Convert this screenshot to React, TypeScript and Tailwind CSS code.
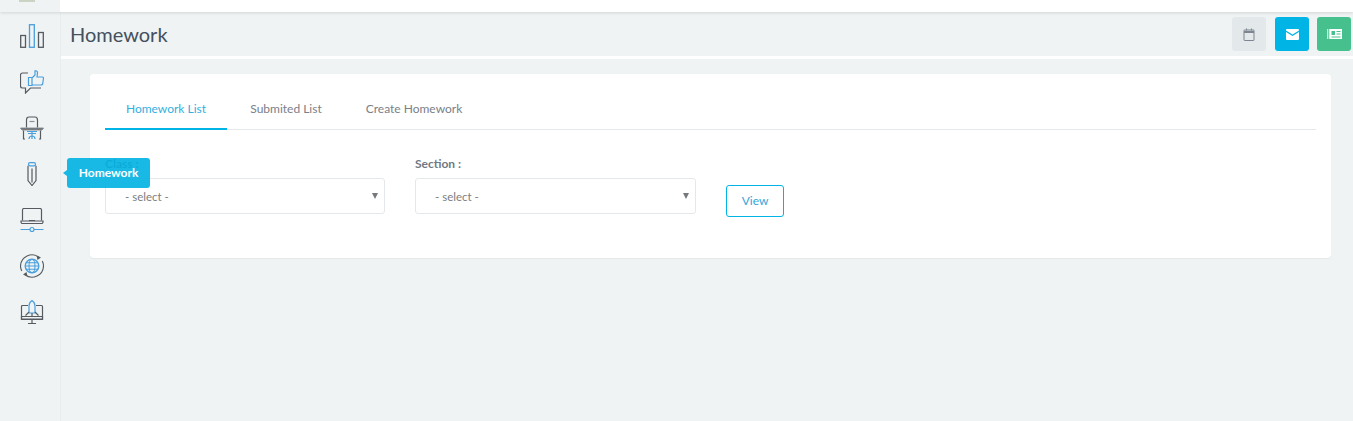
const dark = "#565b61";
const blue = "#4a9fdc";

function BarsIcon() {
  return (
    <svg width="24" height="24" viewBox="0 0 24 24" fill="none" strokeWidth="1.3">
      <rect x="0.700" y="11.500" width="4.800" height="11.800" stroke={dark} />
      <rect x="9.500" y="0.700" width="4.800" height="22.600" stroke={blue} />
      <rect x="18.500" y="8.500" width="4.800" height="14.800" stroke={dark} />
    </svg>
  );
}

function ThumbIcon() {
  return (
    <svg width="24" height="24" viewBox="0 0 24 24" fill="none" strokeWidth="1.2">
      <path d="M8 3H2.500a2 2 0 0 0-2 2v11a2 2 0 0 0 2 2h3v5l5-5h10.500" stroke={dark} />
      <path d="M8.500 7.500h3.500v8H8.500zM12 8l3-3V.800c2-.3 2.800 1 2.400 2.800L17 7h5.500a1 1 0 0 1 1 1.100L22.800 13a2 2 0 0 1-2 2H12" stroke={blue} />
    </svg>
  );
}

function DeskIcon() {
  return (
    <svg width="24" height="24" viewBox="0 0 24 24" fill="none" strokeWidth="1.2">
      <path d="M6.500 11.500V4c0-2 1-3 2.500-3h6c1.500 0 2.500 1 2.500 3v7.500" stroke={dark} />
      <path d="M9.500 5.500h5" stroke="#8a8f94" />
      <path d="M.500 12h23l-1.500 2H2z" fill="#767b80" stroke="#767b80" strokeWidth="0.800" />
      <path d="M3.500 14.500V23h1.500M20.500 14.500V23H19" stroke={dark} />
      <path d="M7 15.500h10M8 17.500h8M12 15.500V23M9 23c0-2 1-3 3-3s3 1 3 3" stroke={blue} />
    </svg>
  );
}

function PencilIcon() {
  return (
    <svg width="24" height="24" viewBox="0 0 24 24" fill="none" strokeWidth="1.2">
      <rect x="8.500" y="0.600" width="7" height="3.200" rx="1.600" stroke={blue} />
      <path d="M8 3.800V18.500l4 5 4-5V3.800M12 6.500v14" stroke={dark} />
    </svg>
  );
}

function LaptopIcon() {
  return (
    <svg width="24" height="24" viewBox="0 0 24 24" fill="none" strokeWidth="1.2">
      <path d="M2.500 12.500V2a1.500 1.500 0 0 1 1.500-1.500h16A1.500 1.500 0 0 1 21.500 2v10.500" stroke={dark} />
      <path d="M1 13h22v1a1.500 1.500 0 0 1-1.500 1.500h-19A1.500 1.500 0 0 1 1 14zM9 12.500h6" stroke={dark} />
      <path d="M.500 21.500h9.500M14 21.500h9.500" stroke={blue} />
      <circle cx="12" cy="21.500" r="2" stroke={blue} />
    </svg>
  );
}

function GlobeIcon() {
  return (
    <svg width="24" height="24" viewBox="0 0 24 24" fill="none" strokeWidth="1.1">
      <path d="M19 3.200A11.500 11.500 0 0 0 .500 12c0 2 .5 3.500 1.200 5" stroke={dark} />
      <path d="M5 20.800A11.500 11.500 0 0 0 23.500 12c0-2-.5-3.500-1.200-5" stroke={dark} />
      <path d="M16.500 1.500l4.500 2-3.500 2.500zM7.500 22.500l-4.500-2 3.500-2.500z" fill={dark} />
      <circle cx="12" cy="12" r="6.800" stroke={blue} strokeWidth="1.400" />
      <ellipse cx="12" cy="12" rx="3" ry="6.800" stroke={blue} />
      <path d="M5.200 12h13.600M6.200 8.800h11.600M6.200 15.200h11.600" stroke={blue} />
    </svg>
  );
}

function RocketIcon() {
  return (
    <svg width="24" height="24" viewBox="0 0 24 24" fill="none" strokeWidth="1.2">
      <path d="M8 5.500H2.500a1 1 0 0 0-1 1V19h21V6.500a1 1 0 0 0-1-1H16" stroke={dark} />
      <path d="M1.500 16.500h21v3h-21zM12 19.500v3.500M8 23.500h8" stroke={dark} />
      <path d="M9 13V6c0-2.500 1.500-4.500 3-5.500 1.500 1 3 3 3 5.500v7z" stroke={blue} />
      <path d="M9 12l-3.500 3.500M15 12l3.500 3.500M12 13v3" stroke={dark} />
    </svg>
  );
}

function SideIcon({ children }: { children: React.ReactNode }) {
  return <div className="flex h-[46px] items-center justify-center">{children}</div>;
}

function Field({ label, className = "" }: { label: string; className?: string }) {
  return (
    <div className={className}>
      <label className="block h-[23px] text-[12px] font-bold leading-[18px] text-[#6f7985]">{label}</label>
      <div className="relative flex h-[36px] items-center rounded-[3px] border border-[#e5e8ea] pl-[19px] pt-[1px] text-[11.5px] text-[#7d7f82]">
        - select -
        <span className="absolute right-[6px] top-[14px] h-0 w-0 border-x-[3.5px] border-t-[6px] border-x-transparent border-t-[#75797c]" />
      </div>
    </div>
  );
}

export default function App() {
  return (
    <div className="relative h-[421px] w-[1353px] overflow-hidden bg-[#eff3f4] font-['Lato','Liberation_Sans',sans-serif]">
      {/* top strip */}
      <div className="relative z-10 flex h-[12px] shadow-[0_1px_3px_rgba(0,0,0,0.12)]">
        <div className="relative w-[60px] shrink-0 bg-[#eff3f4]">
          <div className="absolute left-[19px] top-0 h-[2px] w-[16px] bg-[#c9d4c4]" />
        </div>
        <div className="flex-1 bg-white" />
      </div>

      <div className="flex h-[409px]">
        {/* sidebar */}
        <aside className="w-[61px] shrink-0 border-r border-[#e9eded] bg-[#eff3f4] pl-[3px] pt-[1px]">
          <SideIcon><BarsIcon /></SideIcon>
          <SideIcon><ThumbIcon /></SideIcon>
          <SideIcon><DeskIcon /></SideIcon>
          <SideIcon><PencilIcon /></SideIcon>
          <SideIcon><LaptopIcon /></SideIcon>
          <SideIcon><GlobeIcon /></SideIcon>
          <SideIcon><RocketIcon /></SideIcon>
        </aside>

        <div className="min-w-0 flex-1">
          {/* title bar */}
          <div className="flex h-[44px] items-center justify-between pl-[9px] pr-[2px]">
            <h1 className="text-[20px] font-normal text-[#44505d]">Homework</h1>
            <div className="flex">
              <button className="flex h-[34px] w-[34px] items-center justify-center rounded-[3px] bg-[#e3e8ea]">
                <svg width="12" height="13" viewBox="0 0 12 13" fill="none" stroke="#7d8590" strokeWidth="1">
                  <rect x="1" y="2" width="10" height="10.500" rx="0.500" />
                  <path d="M1 4h10" strokeWidth="2" />
                  <path d="M3.500 0.500v2M8.500 0.500v2" />
                </svg>
              </button>
              <button className="ml-[9px] flex h-[34px] w-[34px] items-center justify-center rounded-[3px] bg-[#00b5e6]">
                <svg width="13" height="11" viewBox="0 0 13 11" fill="#fff">
                  <path d="M0 1a1 1 0 0 1 1-1h11a1 1 0 0 1 1 1v.500L6.500 5.500 0 1.500zM0 3l6.500 4L13 3v7a1 1 0 0 1-1 1H1a1 1 0 0 1-1-1z" />
                </svg>
              </button>
              <button className="ml-[8px] flex h-[34px] w-[34px] items-center justify-center rounded-[3px] bg-[#46c08c]">
                <svg width="15" height="10" viewBox="0 0 15 10" fill="none">
                  <rect x="0" y="0" width="15" height="10" fill="#c8efdd" />
                  <path d="M1.500 0v10" stroke="#46c08c" strokeWidth="0.700" />
                  <rect x="3" y="0" width="12" height="10" fill="#fff" />
                  <rect x="4.500" y="2" width="3.500" height="4" fill="#46c08c" />
                  <path d="M9.500 2.500h4M9.500 5h4M4.500 8h9" stroke="#46c08c" />
                </svg>
              </button>
            </div>
          </div>
          <div className="h-[3px] bg-white" />

          {/* card */}
          <main className="ml-[29px] mr-[22px] mt-[15px] h-[184px] rounded-[4px] bg-white px-[15px] shadow-[0_1px_1px_rgba(0,0,0,0.05)]">
            <div className="flex h-[56px] border-b border-[#e5e8ea] text-[12px]">
              <a className="flex h-[56px] w-[122px] items-center justify-center border-b-2 border-[#00b5e6] pt-[15px] text-[#33b0e0]">Homework List</a>
              <a className="flex h-[55px] w-[118px] items-center justify-center pt-[14px] text-[#7a8089]">Submited List</a>
              <a className="flex h-[55px] w-[137px] items-center justify-center pl-[1px] pt-[14px] text-[#7a8089]">Create Homework</a>
            </div>
            <div className="mt-[25px] flex items-start">
              <Field label="Class :" className="w-[280px]" />
              <Field label="Section :" className="ml-[30px] w-[281px]" />
              <button className="ml-[30px] mt-[30px] h-[32px] w-[58px] rounded-[3px] border border-[#00b5e6] text-[12px] text-[#33a5d8]">View</button>
            </div>
          </main>
        </div>
      </div>

      {/* tooltip */}
      <div className="absolute left-[67px] top-[158px] flex h-[30px] w-[83px] items-center justify-center rounded-[3px] bg-[#00b1e2]/90 text-[12px] font-bold text-white">
        <span className="absolute -left-[4px] top-[12px] h-0 w-0 border-y-[3px] border-r-[4px] border-y-transparent border-r-[#17b8e6]" />
        Homework
      </div>
    </div>
  );
}
